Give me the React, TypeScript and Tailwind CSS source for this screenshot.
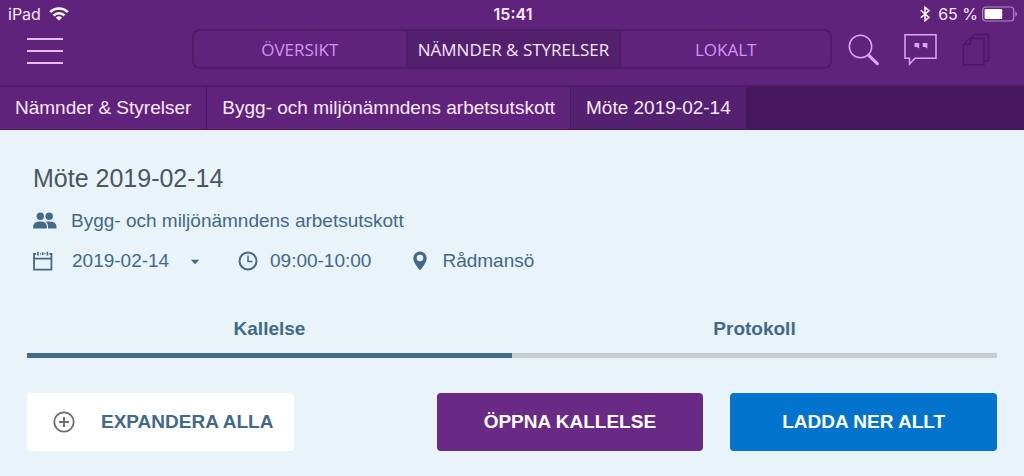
import { useState } from 'react'

const sections = ['ÖVERSIKT', 'NÄMNDER & STYRELSER', 'LOKALT']
const crumbs = ['Nämnder & Styrelser', 'Bygg- och miljönämndens arbetsutskott', 'Möte 2019-02-14']
const tabs = ['Kallelse', 'Protokoll']

function StatusBar() {
  return (
    <div className="grid h-7 grid-cols-3 items-center pr-[6px] pl-2 font-[Inter,sans-serif] text-base leading-6 text-[#f8e9ff]">
      <div className="flex items-center gap-2">
        <span>iPad</span>
        <svg width="20" height="14" viewBox="0 0 20 14" fill="none" stroke="#fff" strokeWidth="2.6">
          <path d="M1.2 5.1a12.4 12.4 0 0 1 17.6 0" />
          <path d="M4.5 8.5a7.8 7.8 0 0 1 11 0" />
          <path d="M10 13.6 6.9 10.7a4.5 4.5 0 0 1 6.2 0z" fill="#fff" stroke="none" />
        </svg>
      </div>
      <span className="text-center font-semibold">15:41</span>
      <div className="flex items-center justify-end">
        <svg width="10" height="16" viewBox="0 0 10 16" fill="none" stroke="#fff" strokeWidth="1.5">
          <path d="M.8 4.3 9 11.4l-4 3.3V1.3l4 3.3-8.2 7.1" />
        </svg>
        <span className="ml-2">65 %</span>
        <svg className="ml-1" width="36" height="16" viewBox="0 0 36 16">
          <rect x=".7" y="1" width="31" height="14" rx="3" fill="none" stroke="#b68bc9" strokeWidth="1.2" />
          <rect x="2.6" y="3" width="17.6" height="10" rx="1" fill="#fff" />
          <path d="M33.4 5.5c2 .8 2 4.2 0 5z" fill="#b68bc9" />
        </svg>
      </div>
    </div>
  )
}

function SearchIcon() {
  return (
    <svg width="32" height="34" viewBox="0 0 32 34" fill="none" stroke="#dba6f6">
      <circle cx="12.5" cy="14.5" r="11.2" strokeWidth="1.5" />
      <path d="m20.8 23.3 8.5 8.3" strokeWidth="3.2" strokeLinecap="round" />
    </svg>
  )
}

function QuoteIcon() {
  return (
    <svg width="34" height="34" viewBox="0 0 34 34" fill="none" stroke="#dba6f6" strokeWidth="1.5">
      <path d="M1 2.800h31v23.400H11l-5.500 5.800v-5.800H1z" />
      <path d="M10.500 11h4.700v5.500l-2.400-1.500h-2.300zM18.700 11h4.700v5.500L21 15h-2.300z" fill="#dba6f6" stroke="none" />
    </svg>
  )
}

function PagesIcon() {
  return (
    <svg width="28" height="34" viewBox="0 0 28 34" fill="none" stroke="#4a1767" strokeWidth="1.5">
      <path d="M7.500 6.500H22v26.300H1.500V12.500z" />
      <path d="M8.500 6.500v4.500q0 1.500-1.500 1.500H1.500" />
      <path d="M9.500 6.500 12.500 2.500h14v26.300H22" />
    </svg>
  )
}

function PeopleIcon() {
  return (
    <svg width="24" height="18" viewBox="0 0 24 18" fill="currentColor">
      <circle cx="7.3" cy="4.2" r="3.7" />
      <circle cx="16.2" cy="4.2" r="3.7" />
      <path d="M.2 16.500v-2C.2 10.800 4 9.500 7.300 9.500s6.500 1.300 6.500 5v2z" />
      <path d="M15 16.500v-2c0-2-.7-3.500-2-4.600 1-.3 2-.4 3-.4 3.600 0 7.500 1.300 7.500 5v2z" />
    </svg>
  )
}

function CalendarIcon() {
  return (
    <svg width="20" height="20" viewBox="0 0 20 20" fill="none" stroke="currentColor" strokeWidth="1.8">
      <path d="M3 2.900H1v15.700h17.400V2.900h-2M1 7.600h17.400" />
      <path d="M5 .8v3.700M9.700 1.300v2.800M14.400 .8v3.700" strokeWidth="1.6" />
      <path d="M7 2.700h.9M11.500 2.700h.9" strokeWidth="1.600" />
    </svg>
  )
}

function ClockIcon() {
  return (
    <svg width="20" height="20" viewBox="0 0 20 20" fill="none" stroke="currentColor">
      <circle cx="10" cy="10" r="8.5" strokeWidth="2" />
      <path d="M10 4.5V10.500h4.500" strokeWidth="1.5" />
    </svg>
  )
}

function PinIcon() {
  return (
    <svg width="14" height="20" viewBox="0 0 14 20" fill="currentColor">
      <path fillRule="evenodd" d="M7 .5a6.700 6.700 0 0 0-6.700 6.700C.3 12 7 19.300 7 19.300s6.700-7.300 6.700-12.100A6.700 6.700 0 0 0 7 .5zm0 3.300a3.300 3.300 0 1 1 0 6.600 3.300 3.300 0 0 1 0-6.600z" />
    </svg>
  )
}

export default function App() {
  const [section, setSection] = useState(1)
  const [tab, setTab] = useState(0)

  return (
    <div className="min-h-screen bg-[#e8f4f9] font-['Liberation_Sans',Arial,sans-serif] text-[19px] leading-6 text-[#41698a]">
      <header className="bg-[#5f237c]">
        <StatusBar />
        <div className="grid grid-cols-[3fr_10fr_3fr] items-center pt-px pb-4">
          <button type="button" aria-label="Meny" className="ml-[27px] flex w-9 flex-col gap-[10px] pt-1">
            <span className="h-[2px] w-full bg-[#e3bdf3]" />
            <span className="h-[2px] w-full bg-[#e3bdf3]" />
            <span className="h-[2px] w-full bg-[#e3bdf3]" />
          </button>
          <nav className="grid h-10 grid-cols-[43fr_43fr_42fr] divide-x-2 divide-[#4f1b69] overflow-hidden rounded-lg border-2 border-[#4f1b69] font-['Open_Sans','Noto_Sans',sans-serif] text-[17px]">
            {sections.map((s, i) => (
              <button
                key={s}
                type="button"
                onClick={() => setSection(i)}
                className={`pt-px whitespace-nowrap ${i === section ? 'bg-[#52206d] text-[#f9e6ff]' : 'text-[#d294f2]'}`}
              >
                {s}
              </button>
            ))}
          </nav>
          <div className="flex items-center gap-6 pl-4">
            <button type="button" aria-label="Sök"><SearchIcon /></button>
            <button type="button" aria-label="Kommentarer"><QuoteIcon /></button>
            <button type="button" aria-label="Dokument"><PagesIcon /></button>
          </div>
        </div>
        <nav className="flex border-t-2 border-b border-t-[#501b6a] border-b-[#451560] bg-[#45175c] text-[#fbeaff]">
          {crumbs.map((c, i) => (
            <a
              key={c}
              href="#"
              className={`px-[15px] py-[9px] whitespace-nowrap ${
                i === crumbs.length - 1 ? 'bg-[#542070]' : 'border-r border-[#461660] bg-[#5f237c]'
              }`}
            >
              {c}
            </a>
          ))}
        </nav>
      </header>

      <main className="px-[27px] pt-8 pb-6">
        <section className="px-[6px]">
          <h1 className="text-[25px] leading-8 text-[#4b5660]">Möte 2019-02-14</h1>
          <div className="mt-[15px] flex items-center gap-[14px]">
            <PeopleIcon />
            <span>Bygg- och miljönämndens arbetsutskott</span>
          </div>
          <div className="mt-4 flex items-center">
            <CalendarIcon />
            <div className="relative ml-[19px]">
              <select aria-label="Datum" className="h-6 w-[134px] appearance-none bg-transparent">
                <option>2019-02-14</option>
              </select>
              <svg className="pointer-events-none absolute top-[10px] right-[6px]" width="10" height="6" viewBox="0 0 10 6" fill="currentColor">
                <path d="M.8.8h8.400L5 5.200z" />
              </svg>
            </div>
            <div className="ml-8 flex items-center gap-3">
              <ClockIcon />
              <span>09:00-10:00</span>
            </div>
            <div className="ml-[42px] flex items-center gap-[15px]">
              <PinIcon />
              <span>Rådmansö</span>
            </div>
          </div>
        </section>

        <div role="tablist" className="mt-11 grid grid-cols-2 font-bold">
          {tabs.map((t, i) => (
            <button
              key={t}
              type="button"
              role="tab"
              aria-selected={i === tab}
              onClick={() => setTab(i)}
              className={`border-b-[5px] pb-3 ${i === tab ? 'border-[#41698a]' : 'border-[#cbcdd0]'}`}
            >
              {t}
            </button>
          ))}
        </div>

        <div className="mt-[35px] flex gap-[27px] font-bold">
          <button type="button" className="mr-auto flex h-[58px] w-[27.5%] items-center rounded bg-white pl-[26px] whitespace-nowrap">
            <svg width="22" height="22" viewBox="0 0 22 22" fill="none" stroke="#6f6f6f" strokeWidth="2">
              <circle cx="11" cy="11" r="9.7" strokeWidth="1.8" />
              <path d="M11 6v10M6 11h10" />
            </svg>
            <span className="ml-[26px]">EXPANDERA ALLA</span>
          </button>
          <button type="button" className="h-[58px] w-[27.5%] rounded bg-[#692a85] text-white">ÖPPNA KALLELSE</button>
          <button type="button" className="h-[58px] w-[27.5%] rounded bg-[#0274ce] text-white">LADDA NER ALLT</button>
        </div>
      </main>
    </div>
  )
}
